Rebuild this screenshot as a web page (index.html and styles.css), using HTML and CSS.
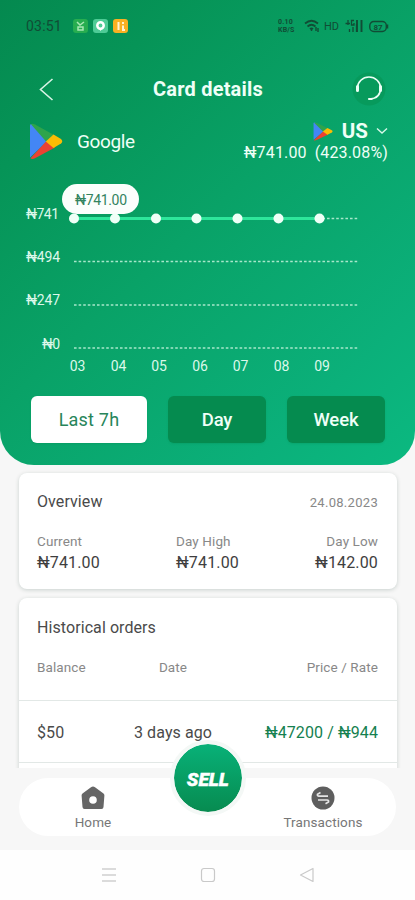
FILE: index.html
```html
<!DOCTYPE html>
<html lang="en">
<head>
<meta charset="utf-8">
<title>Card details</title>
<link rel="stylesheet" href="styles.css">
</head>
<body>
<svg class="defs" width="0" height="0">
  <symbol id="play" viewBox="0 0 34 37">
    <path fill="#4386f5" d="M1 2.500v32L18 18.500 4 1.500Q1 0 1 2.500Z"/>
    <path fill="#2ea44b" d="M2 1.300Q3.500.3 6 1.600L26 12.500 17.500 19Z"/>
    <path fill="#eb4132" d="M1.500 35.300Q3 36.800 6 35.200L26 24.500 17.500 18Z"/>
    <path fill="#fbbc04" d="M24.500 11.500 32 16Q34.500 18.300 32 20.600L24.500 25 16.800 18.400Z"/>
  </symbol>
</svg>
<div class="phone">
  <header class="hero">
    <div class="status">
      <span class="clock">03:51</span>
      <svg class="apps" width="56" height="16" viewBox="0 0 56 16">
        <rect x="0" y="1" width="15" height="14" rx="3" fill="#27ad50"/>
        <path d="M4 4l3 3 4-3M5 9h5v3H5z" fill="none" stroke="#a9e8b5" stroke-width="1.500"/>
        <rect x="20" y="1" width="15" height="14" rx="3" fill="#4ecb96"/>
        <circle cx="27.500" cy="7.500" r="3.200" fill="none" stroke="#fff" stroke-width="2.500"/><path d="M25.500 10h4l-2 3z" fill="#fff"/>
        <rect x="40" y="1" width="15" height="14" rx="3" fill="#f9b022"/>
        <path d="M45.500 4v8M50 4v2M50 7.500V12h2" fill="none" stroke="#fff3d2" stroke-width="2"/>
      </svg>
      <div class="net"><span>0.10</span><span>KB/S</span></div>
      <svg class="wifi" width="16" height="14" viewBox="0 0 16 14" fill="none" stroke="#114c35" stroke-width="1.700">
        <path d="M1 4.500Q7.500-1 14 4.500M3.500 7.500q4-3.500 8 0M6 10q1.500-1.300 3 0"/><path d="M7.500 9v3M12 8v4M14 9v4" stroke-width="1.400"/>
      </svg>
      <span class="hd">HD</span>
      <svg class="signal" width="18" height="14" viewBox="0 0 18 14" fill="none" stroke="#114c35">
        <path d="M3 1v5M.5 4.500H5M9 1.500H6.500V6H9V4M4.500 10v3M8 8v5M11.500 5v8" stroke-width="1.300"/><path d="M12 1v12M16.500 1v12" stroke-width="1.900"/>
      </svg>
      <svg class="battery" width="20" height="13" viewBox="0 0 20 13">
        <rect x=".8" y="1.500" width="16.500" height="10" rx="4" fill="none" stroke="#114c35" stroke-width="1.400"/>
        <path d="M18.500 4.500v4" stroke="#114c35" stroke-width="1.500"/>
        <text x="4.500" y="9.500" class="battext">87</text>
      </svg>
    </div>
    <div class="titlebar">
      <svg width="36" height="36" viewBox="0 0 36 36"><path d="M23.500 8 11.500 18.500 23.500 29" fill="none" stroke="#d8f3e5" stroke-width="1.600"/></svg>
      <h1>Card details</h1>
      <svg width="36" height="36" viewBox="0 0 36 36">
        <circle cx="18" cy="18" r="16.500" fill="#079a5c"/>
        <path d="M6.500 17a11.500 11 0 0 1 23 0q0 10.500-11 11" fill="none" stroke="#ecfff6" stroke-width="1.600"/>
        <path d="M6.500 15.500v4M29.500 15.500v4" stroke="#ecfff6" stroke-width="3" stroke-linecap="round"/>
        <path d="M18 28h2.500" stroke="#ecfff6" stroke-width="2.200" stroke-linecap="round"/>
      </svg>
    </div>
    <div class="brandrow">
      <svg class="logo" width="34" height="37"><use href="#play"/></svg>
      <span class="brand">Google</span>
      <div class="region">
        <div class="country"><svg width="20" height="19" viewBox="0 0 34 37" preserveAspectRatio="none"><use href="#play"/></svg><b>US</b>
          <svg width="12" height="8" viewBox="0 0 12 8"><path d="M1 1.500l5 4.500 5-4.500" fill="none" stroke="#d8f8e9" stroke-width="1.400"/></svg></div>
        <div class="rate"><span>₦741.00</span><span>(423.08%)</span></div>
      </div>
    </div>
    <svg class="chart" width="415" height="206" viewBox="0 172 415 206">
      <g class="grid"><path d="M74 218.500H358M74 261.500H358M74 305H358"/><path d="M74 348H358"/></g>
      <path d="M74 218.500H319" stroke="#2ee69b" stroke-width="3"/>
      <rect x="62" y="184" width="77" height="30" rx="15" fill="#fbfefc"/>
      <text class="tip" x="75" y="204.500" textLength="52">₦741.00</text>
      <g fill="#effff7"><circle cx="74" cy="218.500" r="5"/><circle cx="115" cy="218.500" r="5"/><circle cx="156" cy="218.500" r="5"/><circle cx="196.500" cy="218.500" r="5"/><circle cx="237.500" cy="218.500" r="5"/><circle cx="278.500" cy="218.500" r="5"/><circle cx="319.500" cy="218.500" r="5"/></g>
      <g class="ylab">
        <text x="26" y="219" textLength="33">₦741</text><text x="26" y="262" textLength="34">₦494</text><text x="26" y="305" textLength="34">₦247</text><text x="42" y="348.500" textLength="18">₦0</text>
      </g>
      <g class="xlab"><text x="77.500" y="371">03</text><text x="118.500" y="371">04</text><text x="159" y="371">05</text><text x="200" y="371">06</text><text x="240.500" y="371">07</text><text x="281.500" y="371">08</text><text x="322" y="371">09</text></g>
    </svg>
    <div class="tabs"><button class="on">Last 7h</button><button>Day</button><button>Week</button></div>
  </header>
  <main>
    <section class="card overview">
      <div class="row head"><h2>Overview</h2><span class="date">24.08.2023</span></div>
      <div class="row stats">
        <div><small>Current</small><strong>₦741.00</strong></div>
        <div><small>Day High</small><strong>₦741.00</strong></div>
        <div class="right"><small>Day Low</small><strong>₦142.00</strong></div>
      </div>
    </section>
    <section class="card history">
      <h2>Historical orders</h2>
      <div class="cols labels"><span>Balance</span><span>Date</span><span>Price / Rate</span></div>
      <div class="cols order"><span>$50</span><span>3 days ago</span><span class="price">₦47200 / ₦944</span></div>
    </section>
  </main>
  <div class="dock">
    <nav>
      <a class="home"><svg width="24" height="24" viewBox="0 0 24 24"><path fill="#666" d="M12 .5Q13 .5 14 1.300L22.500 7.500q1 .8.900 2L22.500 21q-.1 2-2 2H3.500q-1.900 0-2-2L.6 9.500q-.1-1.200.9-2L10 1.300Q11 .5 12 .5Z"/><circle cx="12" cy="14" r="3.800" fill="#fff"/></svg><span>Home</span></a>
      <a class="trans"><svg width="24" height="24" viewBox="0 0 24 24"><circle cx="12" cy="12" r="11.500" fill="#5e5e5e"/><path d="M17 10.200H8Q6 10 6.500 8.200L9.500 6.500M7 14h9q2 .2 1.500 2L14.500 17.700" fill="none" stroke="#e5e5e5" stroke-width="1.700"/></svg><span>Transactions</span></a>
    </nav>
    <div class="sell"><span>SELL</span></div>
  </div>
  <footer class="system">
    <svg width="16" height="16" viewBox="0 0 16 16"><path d="M1 2h14M1 8h14M1 14h14" stroke="#d0d0d0" stroke-width="1.400"/></svg>
    <svg width="16" height="16" viewBox="0 0 16 16"><rect x="1.500" y="1.500" width="13" height="13" rx="2.500" fill="none" stroke="#c9c9c9" stroke-width="1.200"/></svg>
    <svg width="16" height="16" viewBox="0 0 16 16"><path d="M14 1.500v13L1.500 8Z" fill="none" stroke="#c9c9c9" stroke-width="1.200" stroke-linejoin="round"/></svg>
  </footer>
</div>
</body>
</html>
```
FILE: styles.css
```css
* { box-sizing: border-box; }
body { margin: 0; font-family: Roboto, "Noto Sans", sans-serif; color: #4a4a4a; }
.defs { display: block; }
svg { display: block; flex: none; }
h1, h2 { margin: 0; }
.phone { width: 415px; height: 900px; display: flex; flex-direction: column; background: #f7f7f7; overflow: hidden; }
.hero { height: 465px; flex: none; border-radius: 0 0 34px 34px; background: linear-gradient(137deg, #04894f 0%, #069457 20%, #09a267 48%, #0bb07a 82%, #0bb980 100%); color: #effff7; }

.status { height: 52px; display: flex; align-items: center; padding-left: 26px; color: #114c35; }
.clock { width: 47px; font-size: 14px; letter-spacing: .2px; }
.net { margin-left: 149px; width: 21px; display: grid; font-size: 7px; line-height: 8px; font-weight: 700; letter-spacing: .2px; }
.wifi { margin-left: 5px; }
.hd { width: 17px; margin-left: 4px; font-size: 11px; }
.signal { margin-left: 4px; }
.battery { margin-left: 6px; }
.battext { font-size: 8px; font-weight: 700; fill: #114c35; }

.titlebar { height: 74px; padding: 0 28px 0 29px; display: flex; align-items: center; justify-content: space-between; }
h1 { font-size: 20px; font-weight: 700; letter-spacing: .2px; }
.brandrow { height: 46px; display: flex; padding: 0 27px 0 29px; }
.logo { margin-top: -3px; }
.brand { margin: 5px 0 0 14px; font-size: 19px; line-height: 22px; letter-spacing: -.4px; }
.region { margin: -7px 0 0 auto; display: flex; flex-direction: column; align-items: flex-end; }
.country { display: flex; align-items: center; height: 24px; font-size: 20.5px; }
.country b { margin: 0 8px 0 9px; }
.rate { display: flex; gap: 8px; font-size: 16px; line-height: 20px; letter-spacing: .15px; }

.chart { font-size: 14px; }
.grid { stroke: #a7e7ca; stroke-width: 1.300; stroke-dasharray: 2.600 2; fill: none; }
.ylab, .xlab { fill: #dcf8ea; font-size: 14px; }
.xlab { text-anchor: middle; }
.tip { fill: #33835f; font-size: 14px; }

.tabs { display: flex; padding: 18px 30px 0 31px; gap: 21px; }
.tabs button { flex: 98 1 0; height: 47px; padding: 0; border: 0; border-radius: 6px; background: #058b4f; color: #effff7; font: 500 18.5px Roboto, sans-serif; letter-spacing: -.1px; box-shadow: 0 1px 2px #04774333; }
.tabs .on { flex: 116 1 0; background: #fff; color: #27855a; font-size: 18px; font-weight: 400; letter-spacing: .2px; }

main { padding: 8px 18px 0 19px; height: 303px; overflow: hidden; flex: none; }
.card { background: #fff; border-radius: 8px; box-shadow: 0 1px 4px #00302030; }
.row { display: flex; justify-content: space-between; }
.overview { height: 116px; padding: 19px 19px 0 18px; }
.head { align-items: center; height: 20px; }
h2 { font-size: 16px; font-weight: 400; line-height: 20px; letter-spacing: .08px; }
.date { font-size: 13px; color: #888; letter-spacing: .3px; }
.stats { margin-top: 20px; }
.stats div { display: grid; }
small, .labels, nav { font-size: 13.5px; color: #888; letter-spacing: .1px; }
small { line-height: 19px; }
strong { font-size: 16px; line-height: 24px; font-weight: 400; color: #3e3e3e; letter-spacing: .15px; }
.right { text-align: right; }
.history { margin-top: 9px; height: 190px; padding-top: 20px; }
.history h2 { margin-left: 18px; }
.cols { display: grid; grid-template-columns: 75px 122px 1fr; padding: 0 19px 0 18px; align-items: center; }
.cols span:nth-child(2) { text-align: center; }
.cols span:last-child { text-align: right; }
.labels { height: 63px; padding-bottom: 4px; border-bottom: 1px solid #e2e8e6; }
.order { height: 62px; padding-top: 2px; font-size: 16px; letter-spacing: .1px; border-bottom: 1px solid #e2e8e6; }
.order .price { color: #14804f; }

.dock { position: relative; height: 82px; padding: 10px 19px 0; flex: none; }
nav { height: 58px; border-radius: 29px; background: #fff; display: flex; justify-content: space-between; color: #777; }
nav a { display: grid; justify-items: center; align-content: start; padding-top: 8px; width: 148px; line-height: 18px; row-gap: 3px; color: #777; }
.trans { width: 146px; }
.sell { position: absolute; left: 170px; top: -28px; width: 76px; height: 76px; border: 4px solid #f4f8f6; border-radius: 50%; background: linear-gradient(#08b178, #078b50) padding-box; color: #fff; display: flex; align-items: center; justify-content: center; font: italic 900 18px Roboto, sans-serif; }
.sell span { transform: scaleX(1.06); -webkit-text-stroke: .4px #fff; padding-top: 2px; }
.system { height: 50px; flex: none; background: #fefefe; display: flex; justify-content: center; gap: 83px; padding-top: 17px; }
```
